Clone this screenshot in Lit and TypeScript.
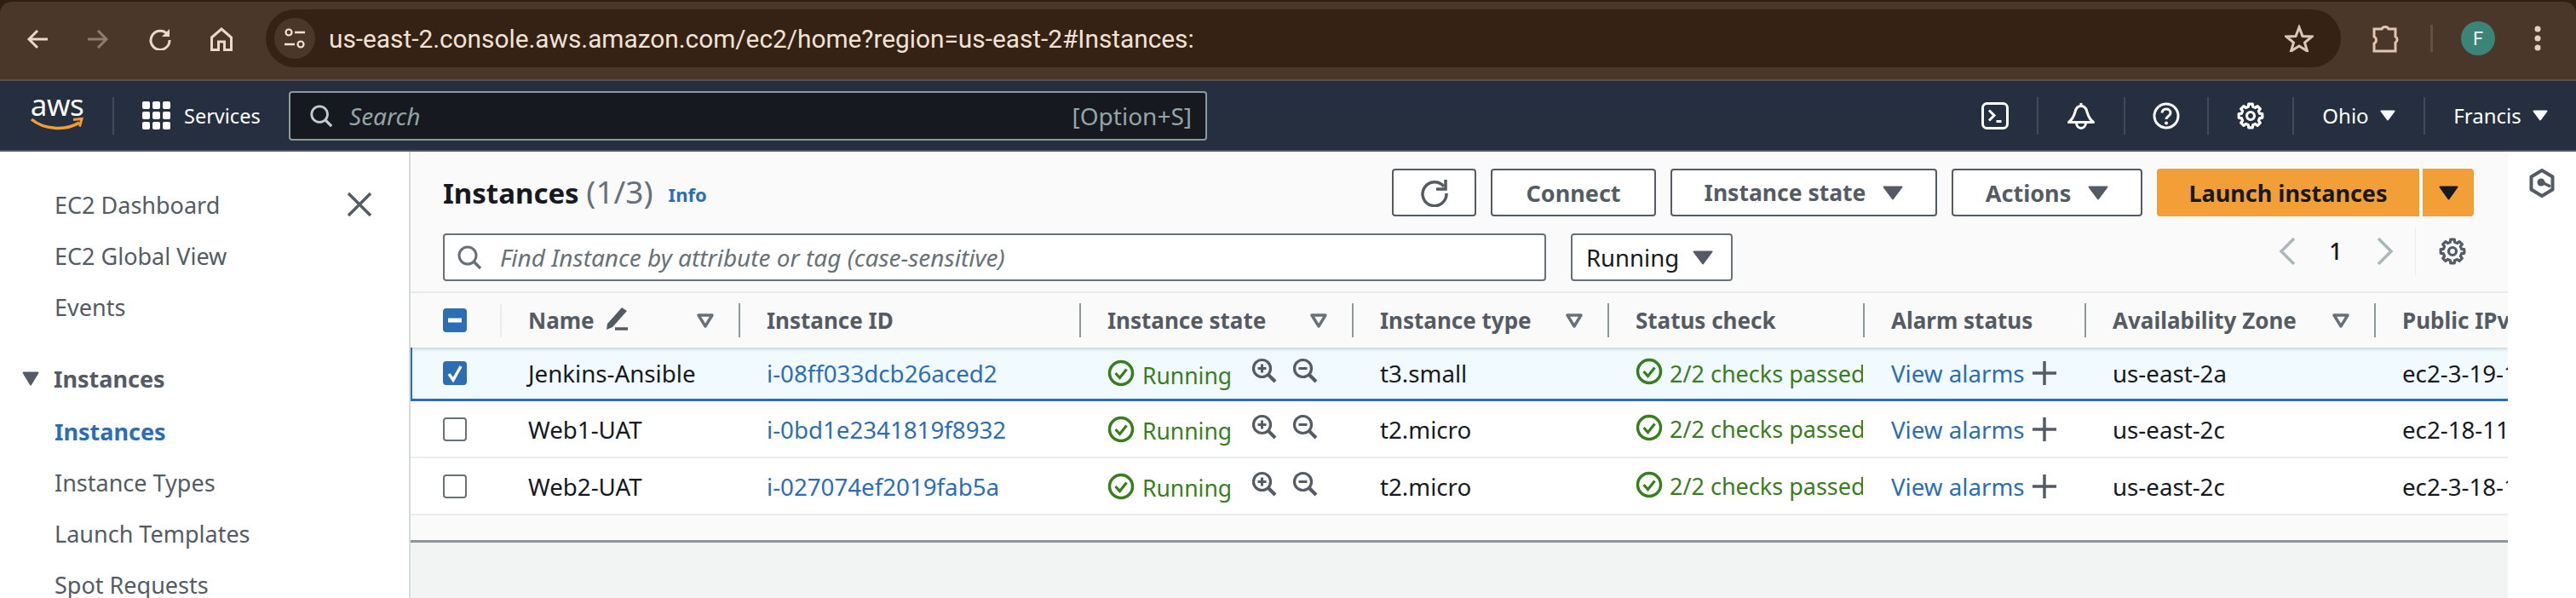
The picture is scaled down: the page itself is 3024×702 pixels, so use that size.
import { LitElement, html, css, svg } from "lit";
import { customElement } from "lit/decorators.js";

const ic = (w: number, h: number, vb: string, body: unknown, cls = "") =>
  html`<svg class=${cls} width=${w} height=${h} viewBox=${vb} fill="none">${body}</svg>`;

const tri = (w: number, h: number, c: string) =>
  ic(w, h, `0 0 ${w} ${h}`, svg`<path d="M1.500 1.500H${w - 1.5}L${w / 2} ${h - 1.5}Z" fill=${c} stroke=${c} stroke-width="2" stroke-linejoin="round"/>`);

const sortTri = () =>
  ic(20, 17, "0 0 20 17", svg`<path d="M2 2H18L10 15Z" stroke="#687078" stroke-width="3.400" stroke-linejoin="round"/>`);

const gearPath = (() => {
  const pts: string[] = [];
  const n = 8;
  for (let i = 0; i < n; i++) {
    const a = (i / n) * Math.PI * 2 - Math.PI / 2;
    const w = Math.PI / n;
    const p = (r: number, t: number) => `${(16 + r * Math.cos(t)).toFixed(2)} ${(16 + r * Math.sin(t)).toFixed(2)}`;
    pts.push(p(14, a - w * 0.42), p(14, a + w * 0.42), p(11, a + w * 0.62), p(11, a + w * 1.38));
  }
  return "M" + pts.join("L") + "Z";
})();

const gear = (s: number, c: string, sw = 3.2) =>
  ic(s, s, "0 0 32 32", svg`<path d=${gearPath} stroke=${c} stroke-width=${sw} stroke-linejoin="round"/><circle cx="16" cy="16" r="4.500" stroke=${c} stroke-width=${sw}/>`);

const check = () =>
  ic(32, 32, "0 0 32 32", svg`<circle cx="16" cy="16" r="13.500" stroke="#3a7d1f" stroke-width="3.500"/><path d="M9.500 16l5 5.500 8-10" stroke="#3a7d1f" stroke-width="3.200"/>`, "stat");

const zoom = (plus: boolean) =>
  ic(30, 30, "0 0 30 30", svg`<circle cx="12.500" cy="12.500" r="10" stroke="#545b64" stroke-width="3.200"/><path d="M20 20l8 8" stroke="#545b64" stroke-width="4"/><path d="M7.500 12.500h10" stroke="#545b64" stroke-width="3"/>${plus ? svg`<path d="M12.500 7.500v10" stroke="#545b64" stroke-width="3"/>` : ""}`);

const mag = (s: number, c: string) =>
  ic(s, s, "0 0 30 30", svg`<circle cx="13" cy="13" r="10" stroke=${c} stroke-width="3"/><path d="M20 20l8 8" stroke=${c} stroke-width="3.500"/>`);

const rows = [
  { name: "Jenkins-Ansible", id: "i-08ff033dcb26aced2", type: "t3.small", az: "us-east-2a", dns: "ec2-3-19-1", sel: true },
  { name: "Web1-UAT", id: "i-0bd1e2341819f8932", type: "t2.micro", az: "us-east-2c", dns: "ec2-18-117", sel: false },
  { name: "Web2-UAT", id: "i-027074ef2019fab5a", type: "t2.micro", az: "us-east-2c", dns: "ec2-3-18-1", sel: false },
];

const sideTop = ["EC2 Dashboard", "EC2 Global View", "Events"];
const sideSub = ["Instance Types", "Launch Templates", "Spot Requests"];

@customElement("app-root")
export class AppRoot extends LitElement {
  static styles = css`
    :host { display: block; width: 3024px; height: 702px; overflow: hidden; font-family: "Noto Sans", sans-serif; background: #fff; }
    svg { display: block; flex: none; }
    .chrome { height: 95px; background: #2e1e13; padding-top: 2px; box-sizing: border-box; }
    .toolbar { height: 93px; background: #4a372a; border-radius: 14px 14px 0 0; border-bottom: 2px solid #5b4f47; box-sizing: border-box; display: flex; align-items: center; position: relative; }
    .tb { display: flex; align-items: center; justify-content: center; height: 70px; margin-top: -4px; }
    .t1 { width: 26px; margin-left: 31px; }
    .t2 { width: 26px; margin-left: 45px; }
    .t3 { width: 26px; margin-left: 47px; }
    .t4 { width: 26px; margin-left: 46px; }
    .url { margin: -5px 0 0 39px; width: 2436px; height: 68px; border-radius: 34px; background: #352215; display: flex; align-items: center; box-sizing: border-box; padding-left: 10px; }
    .tune { width: 48px; height: 48px; border-radius: 50%; background: #4a372a; display: flex; align-items: center; justify-content: center; }
    .urltext { margin-left: 16px; font: 400 29.800px "Roboto", sans-serif; color: #f2e2d6; flex: 1; white-space: nowrap; }
    .star { margin-right: 32px; }
    .puzzle { margin: -5px 0 0 37px; }
    .div { width: 3px; height: 32px; background: #63503f; margin: -5px 0 0 36px; }
    .avatar { width: 40px; height: 40px; border-radius: 50%; background: #3b8478; color: #f4f4f4; font: 400 22px "Roboto", sans-serif; display: flex; align-items: center; justify-content: center; margin: -5px 0 0 33px; }
    .dots { margin: -5px 0 0 46px; }

    .nav { height: 81px; background: #252f3f; display: flex; align-items: center; border-bottom: 2px solid #4c5564; box-sizing: content-box; color: #fff; }
    .logo { width: 64px; margin-left: 35px; height: 40px; position: relative; display: flex; justify-content: center; }
    .awstext { font: 400 35px/30px "Noto Sans", sans-serif; color: #fff; letter-spacing: -0.500px; margin-top: -8px; }
    .smile { position: absolute; left: 0; top: 21px; }
    .navsep { width: 2px; height: 44px; background: #414b5b; }
    .logo + .navsep { margin-left: 33px; }
    .grid { margin-left: 33px; }
    .services { margin-left: 16px; font-size: 23.500px; color: #fff; width: 88px; white-space: nowrap; }
    .search { margin-left: 35px; width: 1078px; height: 58px; box-sizing: border-box; background: #16191f; border: 2px solid #8d9a9b; border-radius: 4px; display: flex; align-items: center; padding: 0 16px 0 22px; color: #95a5a6; font-size: 28px; }
    .search .ph { font-style: italic; margin-left: 19px; flex: 1; }
    .navright { display: flex; margin-left: auto; align-items: center; }
    .ni { height: 44px; display: flex; align-items: center; justify-content: center; box-sizing: border-box; border-right: 2px solid #414b5b; font-size: 24px; }
    .ni.last { border-right: 0; }
    .ni .tx { margin-right: 13px; }

    .main { display: flex; height: 524px; }
    .side { width: 480px; flex: none; box-sizing: border-box; padding-top: 32px; background: #fff; color: #545b64; font-size: 27px; position: relative; }
    .si { height: 60px; display: flex; align-items: center; padding-left: 64px; white-space: nowrap; }
    .close { position: absolute; left: 407px; top: 47px; }
    .group { height: 60px; margin-top: 24px; display: flex; align-items: center; padding-left: 26px; font-weight: 700; gap: 17px; margin-bottom: 2px; }
    .si.active { color: #2c6db3; font-weight: 700; }

    .content { width: 2464px; flex: none; background: #f2f3f3; border-left: 2px solid #d5dbdb; box-sizing: border-box; overflow: hidden; }
    .panel { background: #fafafa; border-bottom: 3px solid #8c9899; height: 459px; box-sizing: border-box; }
    .head { display: flex; align-items: center; padding: 20px 40px 0 38px; height: 76px; box-sizing: border-box; }
    .title { font-size: 33px; font-weight: 700; color: #16191f; white-space: nowrap; margin-top: -4px; }
    .count { font-weight: 400; color: #687078; font-size: 37px; }
    .info { font-size: 22px; font-weight: 700; color: #2c6db3; margin: 4px 0 0 18px; }
    .btns { margin-left: auto; display: flex; gap: 17px; }
    .btn { height: 56px; box-sizing: border-box; border: 2px solid #545b64; border-radius: 4px; background: #fff; color: #545b64; font-weight: 700; font-size: 27px; display: flex; align-items: center; justify-content: center; gap: 20px; white-space: nowrap; }
    .b3 { font-size: 26.500px; }
    .primary { display: flex; gap: 4px; }
    .primary .btn { background: #f29f38; border: 0; color: #16191f; }
    .b1 { width: 99px; } .b2 { width: 194px; } .b3 { width: 313px; } .b4 { width: 224px; }
    .b5 { width: 308px; border-radius: 4px 0 0 4px !important; } .b6 { width: 60px; border-radius: 0 4px 4px 0 !important; }

    .filter { display: flex; align-items: center; padding: 0 49px 0 38px; height: 56px; margin: 20px 0 12px; }
    .fbox { width: 1295px; height: 56px; box-sizing: border-box; border: 2px solid #687078; border-radius: 4px; background: #fff; display: flex; align-items: center; padding-left: 14px; gap: 21px; font-style: italic; font-size: 28px; color: #687078; white-space: nowrap; }
    .sel { margin-left: 29px; width: 190px; height: 56px; box-sizing: border-box; border: 2px solid #687078; border-radius: 4px; background: #fff; display: flex; align-items: center; padding-left: 16px; gap: 16px; font-size: 27.500px; color: #16191f; }
    .pager { margin-left: auto; display: flex; align-items: center; height: 56px; margin-top: -15px; }
    .page { font-size: 27px; color: #16191f; font-weight: 500; margin: 0 40px 0 39px; width: 16px; text-align: center; }
    .pdiv { width: 1px; height: 56px; background: #eaeded; margin: 0 27px 0 25px; }

    .table { border-top: 2px solid #eaeded; }
    .tr { display: grid; grid-template-columns: 105px 280px 400px 320px 300px 300px 260px 340px 159px; }
    .th { height: 64px; background: #fafafa; box-shadow: 0 2px 4px rgba(0,28,36,.18); position: relative; color: #545b64; font-weight: 700; font-size: 26px; }
    .tc { display: flex; align-items: center; padding-left: 33px; white-space: nowrap; overflow: hidden; min-width: 0; box-sizing: border-box; }
    .th .tc { position: relative; overflow: visible; height: 64px; justify-content: flex-start; }
    .th .tc:last-child { overflow: hidden; }
    .th .tc + .tc::before { content: ""; position: absolute; left: 0; top: 12px; height: 40px; width: 2px; background: #8c9899; }
    .th .tc:nth-child(2)::before { background: #eaeded; }
    .sort { margin-left: auto; margin-right: 29px; }
    .pencil { margin-left: 12px; margin-top: -4px; }
    .td { height: 67px; background: #fff; border-bottom: 2px solid #eaeded; box-sizing: border-box; color: #16191f; font-size: 27.700px; }
    .td.sel-row { height: 63px; background: #f1faff; border-bottom: 3px solid #2c6db3; box-shadow: inset 2px 0 0 #2c6db3; }
    .tc.cb { padding-left: 38px; }
    .box { width: 28px; height: 28px; box-sizing: border-box; border-radius: 4px; border: 2px solid #687078; background: #fff; display: flex; align-items: center; justify-content: center; }
    .box.on { background: #2c6db3; border-color: #2c6db3; }
    .link { color: #2c6db3; }
    .green { color: #3a7d1f; }
    .state { gap: 9px; }
    .state .green { margin-top: 5px; width: 119px; font-size: 26.500px; }
    .state .z { margin: -6px 0 0 0; }
    .state .z + .z { margin-left: 9px; }
    .status { gap: 8px; padding-right: 0; font-size: 27px; }
    .status .stat { margin-top: -4px; }
    .alarm { gap: 9px; }
    .foot { height: 30px; }
    .rail { width: 80px; flex: none; background: #fff; display: flex; justify-content: center; padding-top: 20px; box-sizing: border-box; }
  `;

  render() {
    return html`
      <div class="chrome"><div class="toolbar">
        <div class="tb t1">${ic(26, 24, "0 0 26 24", svg`<path d="M25 12H3M13 2L3 12l10 10" stroke="#ecd8c8" stroke-width="3"/>`)}</div>
        <div class="tb t2">${ic(26, 24, "0 0 26 24", svg`<path d="M1 12h22M13 2l10 10-10 10" stroke="#8d7d71" stroke-width="3"/>`)}</div>
        <div class="tb t3">${ic(26, 26, "0 0 26 26", svg`<path d="M22 8A11 11 0 1 0 24 14" stroke="#ecd8c8" stroke-width="3"/><path d="M24 1v9h-9" fill="#ecd8c8"/>`)}</div>
        <div class="tb t4">${ic(26, 28, "0 0 26 28", svg`<path d="M1.500 12L13 2l11.500 10v14.500h-8V17h-7v9.500h-8z" stroke="#ecd8c8" stroke-width="3"/>`)}</div>
        <div class="url">
          <div class="tune">${ic(26, 26, "0 0 26 26", svg`<circle cx="6" cy="6" r="3.500" stroke="#f2e2d6" stroke-width="2.200"/><path d="M13 6h12M1 20h12" stroke="#f2e2d6" stroke-width="2.500"/><circle cx="20" cy="20" r="3.500" stroke="#f2e2d6" stroke-width="2.200"/>`)}</div>
          <div class="urltext">us-east-2.console.aws.amazon.com/ec2/home?region=us-east-2#Instances:</div>
          <div class="star">${ic(34, 32, "0 0 34 32", svg`<path d="M17 3l4 10.500 11 .5-8.500 7 3 10L17 25l-9.500 6 3-10L2 14l11-.5z" stroke="#d9c7ba" stroke-width="3"/>`)}</div>
        </div>
        <div class="puzzle">${ic(32, 34, "0 0 32 34", svg`<path d="M2 6h9a4.500 4.500 0 0 1 8 0h8v9a4 4 0 0 1 0 7v10H2v-9a4.500 4.500 0 0 0 0-8z" stroke="#e3c4ae" stroke-width="3"/>`)}</div>
        <div class="div"></div>
        <div class="avatar">F</div>
        <div class="dots">${ic(8, 30, "0 0 8 30", svg`<circle cx="4" cy="4" r="3.500" fill="#e3d2c4"/><circle cx="4" cy="15" r="3.500" fill="#e3d2c4"/><circle cx="4" cy="26" r="3.500" fill="#e3d2c4"/>`)}</div>
      </div></div>

      <div class="nav">
        <div class="logo">
          <span class="awstext">aws</span>
          <span class="smile">${ic(64, 18, "0 0 64 18", svg`<path d="M2 3C16 15 42 17 58 7" stroke="#f29d38" stroke-width="3.500"/><path d="M51 3.500l10-1-2.500 9" stroke="#f29d38" stroke-width="3"/>`)}</span>
        </div>
        <div class="navsep"></div>
        <div class="grid">${ic(33, 33, "0 0 33 33", svg`${[0, 12, 24].map((y) => [0, 12, 24].map((x) => svg`<rect x=${x} y=${y} width="9" height="9" rx="2" fill="#fff"/>`))}`)}</div>
        <div class="services">Services</div>
        <div class="search">
          ${mag(28, "#c2cccc")}
          <span class="ph">Search</span>
          <span>[Option+S]</span>
        </div>
        <div class="navright">
          <div class="ni" style="width:100px">${ic(32, 32, "0 0 32 32", svg`<rect x="1.500" y="1.500" width="29" height="29" rx="5" stroke="#fff" stroke-width="3"/><path d="M9 9.500l6 6-6 6" stroke="#fff" stroke-width="3"/><path d="M17.500 22.500h6" stroke="#fff" stroke-width="3"/>`)}</div>
          <div class="ni" style="width:102px">${ic(32, 32, "0 0 32 32", svg`<path d="M1.500 23.500c4-3 6-7 7.500-12 1-5 3.500-7 7-7s6 2 7 7c1.500 5 3.500 9 7.500 12z" stroke="#fff" stroke-width="3" stroke-linejoin="round"/><path d="M16 1v3" stroke="#fff" stroke-width="3"/><path d="M10.500 24c0 8.500 11 8.500 11 0" stroke="#fff" stroke-width="3"/>`)}</div>
          <div class="ni" style="width:98px">${ic(32, 32, "0 0 32 32", svg`<circle cx="16" cy="16" r="14" stroke="#fff" stroke-width="3"/><path d="M11 12.500c0-6 10-6 10 0 0 4-5 4-5 7.500" stroke="#fff" stroke-width="3"/><circle cx="16" cy="24.500" r="2" fill="#fff"/>`)}</div>
          <div class="ni" style="width:100px">${gear(32, "#fff")}</div>
          <div class="ni" style="width:154px"><span class="tx">Ohio</span>${tri(18, 13, "#fff")}</div>
          <div class="ni last" style="width:177px"><span class="tx">Francis</span>${tri(18, 13, "#fff")}</div>
        </div>
      </div>

      <div class="main">
        <div class="side">
          ${sideTop.map((s) => html`<div class="si">${s}</div>`)}
          <div class="close">${ic(30, 30, "0 0 30 30", svg`<path d="M2 2l26 26M28 2L2 28" stroke="#545b64" stroke-width="3.500"/>`)}</div>
          <div class="group">${tri(20, 17, "#545b64")}<span>Instances</span></div>
          <div class="si active">Instances</div>
          ${sideSub.map((s) => html`<div class="si">${s}</div>`)}
        </div>
        <div class="content">
          <div class="panel">
            <div class="head">
              <div class="title">Instances <span class="count">(1/3)</span></div>
              <div class="info">Info</div>
              <div class="btns">
                <div class="btn b1">${ic(34, 34, "0 0 34 34", svg`<path d="M28 10A14 14 0 1 0 31 18" stroke="#545b64" stroke-width="3.500"/><path d="M30 2v11H19" stroke="#545b64" stroke-width="3.500"/>`)}</div>
                <div class="btn b2">Connect</div>
                <div class="btn b3">Instance state ${tri(24, 17, "#545b64")}</div>
                <div class="btn b4">Actions ${tri(24, 17, "#545b64")}</div>
                <div class="primary">
                  <div class="btn b5">Launch instances</div>
                  <div class="btn b6">${tri(23, 17, "#16191f")}</div>
                </div>
              </div>
            </div>
            <div class="filter">
              <div class="fbox">${mag(30, "#687078")}<span>Find Instance by attribute or tag (case-sensitive)</span></div>
              <div class="sel">Running ${tri(24, 17, "#545b64")}</div>
              <div class="pager">
                ${ic(20, 32, "0 0 20 32", svg`<path d="M18 1L3 16l15 15" stroke="#aab7b8" stroke-width="3.500"/>`)}
                <span class="page">1</span>
                ${ic(20, 32, "0 0 20 32", svg`<path d="M2 1l15 15L2 31" stroke="#aab7b8" stroke-width="3.500"/>`)}
                <div class="pdiv"></div>
                ${gear(32, "#545b64")}
              </div>
            </div>
            <div class="table">
              <div class="tr th">
                <div class="tc cb"><div class="box on">${ic(16, 6, "0 0 16 6", svg`<rect width="16" height="5" y="0.500" fill="#fff"/>`)}</div></div>
                <div class="tc">Name<span class="pencil">${ic(28, 28, "0 0 28 28", svg`<path d="M20 1l6 4L9 24l-7 3 1-7z" fill="#545b64"/><path d="M12 26h15" stroke="#545b64" stroke-width="3.500"/>`)}</span><span class="sort">${sortTri()}</span></div>
                <div class="tc">Instance ID</div>
                <div class="tc">Instance state<span class="sort">${sortTri()}</span></div>
                <div class="tc">Instance type<span class="sort">${sortTri()}</span></div>
                <div class="tc">Status check</div>
                <div class="tc">Alarm status</div>
                <div class="tc">Availability Zone<span class="sort">${sortTri()}</span></div>
                <div class="tc">Public IPv4 DNS</div>
              </div>
              ${rows.map((r) => html`
                <div class="tr td ${r.sel ? "sel-row" : ""}">
                  <div class="tc cb"><div class="box ${r.sel ? "on" : ""}">${r.sel ? ic(20, 22, "0 0 20 22", svg`<path d="M3 12l5 7L17 3" stroke="#fff" stroke-width="3.500"/>`) : ""}</div></div>
                  <div class="tc">${r.name}</div>
                  <div class="tc link">${r.id}</div>
                  <div class="tc state">${check()}<span class="green">Running</span><span class="z">${zoom(true)}</span><span class="z">${zoom(false)}</span></div>
                  <div class="tc">${r.type}</div>
                  <div class="tc status">${check()}<span class="green">2/2 checks passed</span></div>
                  <div class="tc alarm"><span class="link">View alarms</span>${ic(28, 28, "0 0 28 28", svg`<path d="M14 0v28M0 14h28" stroke="#545b64" stroke-width="3.500"/>`)}</div>
                  <div class="tc">${r.az}</div>
                  <div class="tc">${r.dns}</div>
                </div>`)}
              <div class="foot"></div>
            </div>
          </div>
        </div>
        <div class="rail">${ic(30, 34, "0 0 30 34", svg`<path d="M15 2l12.500 7.500v15L15 32 2.500 24.500v-15z" stroke="#545b64" stroke-width="4" stroke-linejoin="round"/><circle cx="14" cy="16" r="4.500" fill="#545b64"/><path d="M15 16l10 5" stroke="#545b64" stroke-width="3.500"/>`)}</div>
      </div>
    `;
  }
}
